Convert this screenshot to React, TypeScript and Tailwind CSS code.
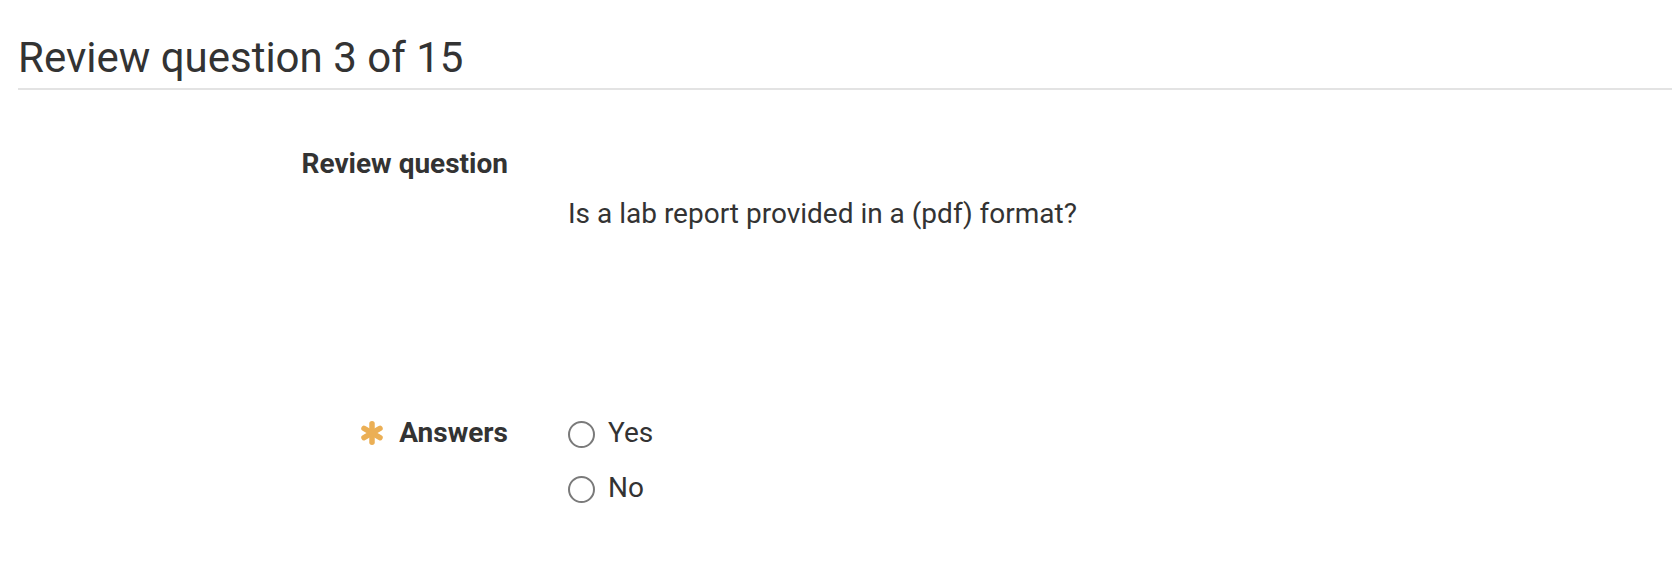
import React from "react";

function RequiredStar() {
  return (
    <svg width="24" height="24" viewBox="0 0 24 24" className="shrink-0" aria-hidden="true">
      <g stroke="#ebaf55" strokeWidth="5.5" strokeLinecap="round">
        <line x1="12" y1="2.8" x2="12" y2="21.2" />
        <line x1="4" y1="7.4" x2="20" y2="16.6" />
        <line x1="4" y1="16.6" x2="20" y2="7.4" />
      </g>
    </svg>
  );
}

function Radio({ label }: { label: string }) {
  return (
    <label className="flex h-[36px] items-center gap-[13px]">
      <span className="mt-[2px] h-[27px] w-[27px] shrink-0 rounded-full border-2 border-[#7a7a7a] bg-white" />
      <span>{label}</span>
    </label>
  );
}

export default function App() {
  return (
    <div
      className="min-h-[584px] bg-white pl-[18px] pt-[33px] text-[#333]"
      style={{ fontFamily: "Roboto, 'Liberation Sans', sans-serif" }}
    >
      <h1 className="border-b-2 border-[#e3e3e3] pb-[5px] text-[42px] leading-[50px] font-normal">
        Review question 3 of 15
      </h1>

      <div className="mt-[56px] grid grid-cols-[490px_1fr] gap-x-[60px] text-[28px] leading-[36px]">
        <div className="text-right font-bold">Review question</div>
        <div />
        <div />
        <div className="mt-[14px]">Is a lab report provided in a (pdf) format?</div>

        <div className="mt-[183px] flex h-[36px] items-center justify-end gap-[15px] self-start font-bold">
          <RequiredStar />
          <span>Answers</span>
        </div>
        <div className="mt-[183px] flex flex-col gap-[19px]">
          <Radio label="Yes" />
          <Radio label="No" />
        </div>
      </div>
    </div>
  );
}
